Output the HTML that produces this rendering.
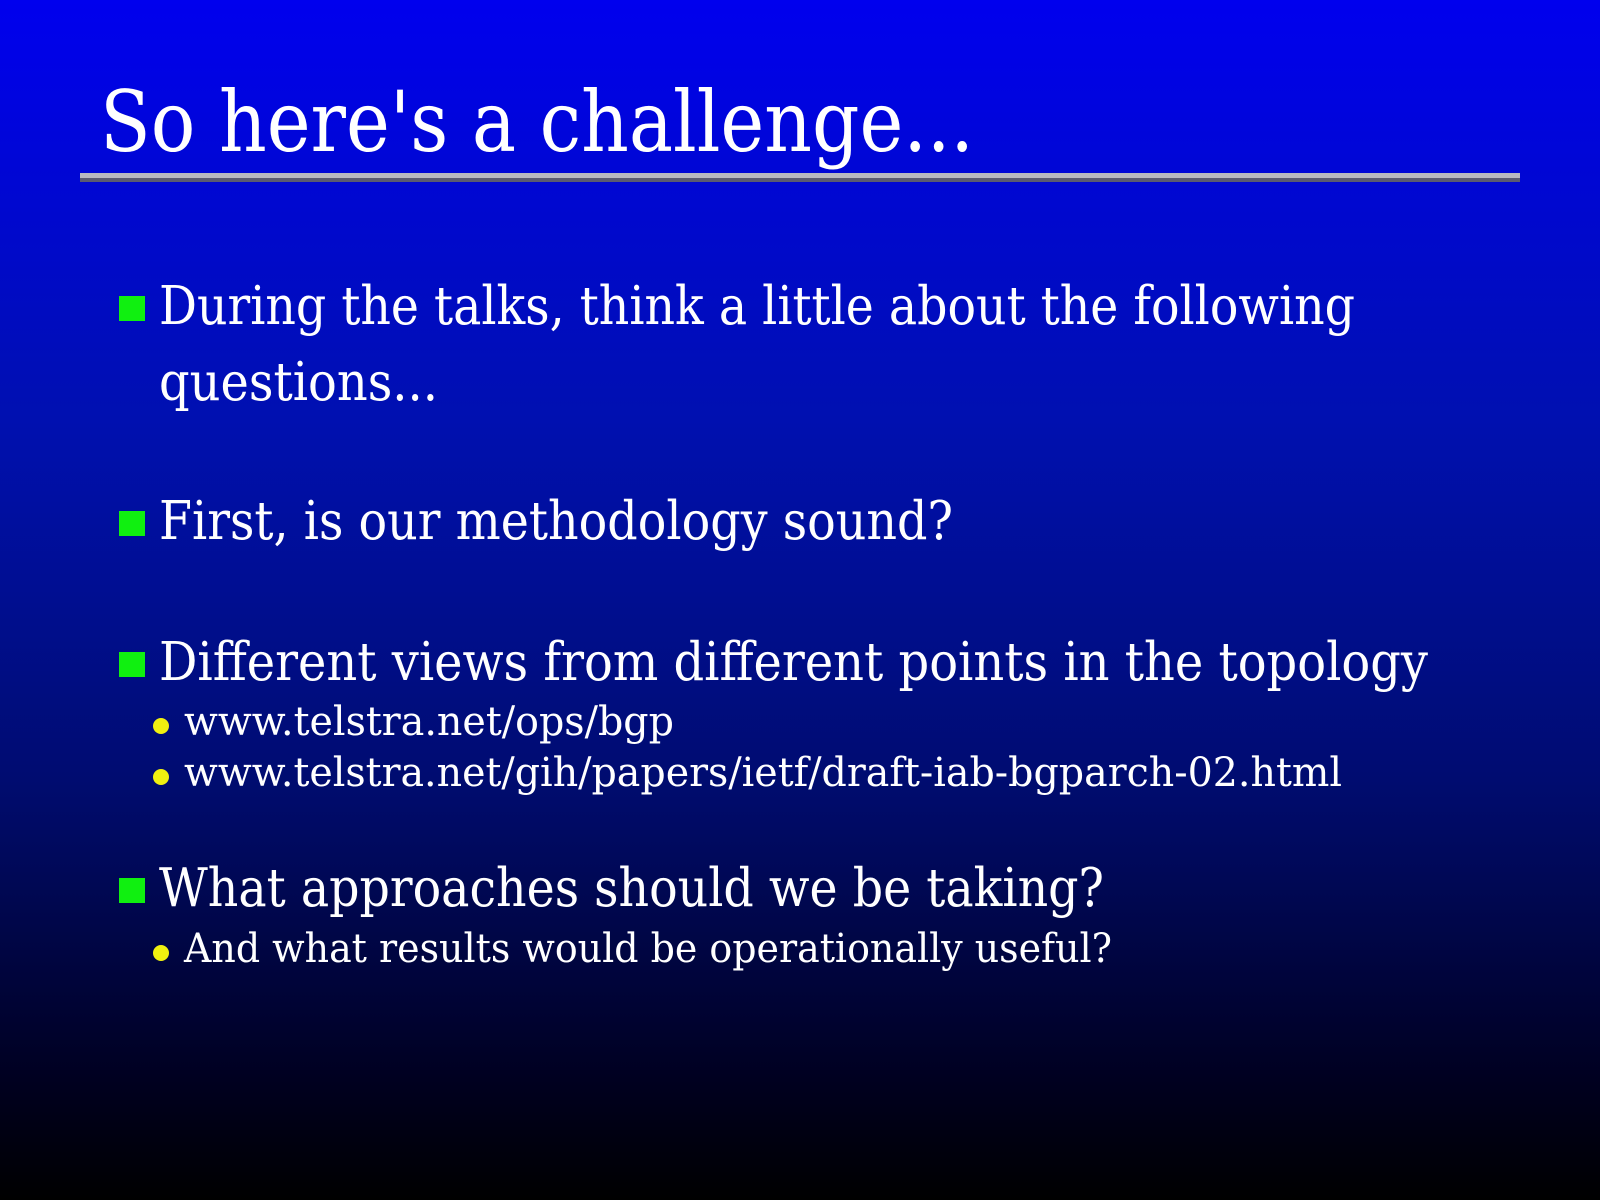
<!DOCTYPE html>
<html><head><meta charset="utf-8"><style>
html,body{margin:0;padding:0;width:1600px;height:1200px;overflow:hidden}
body{background:linear-gradient(to bottom,#0000ee 0%,#0010b0 35%,#000c70 65%,#000020 90%,#000 100%)}
svg{position:absolute;left:0;top:0}
text{font-family:"DejaVu Serif","Liberation Serif",serif;fill:#fff}
</style></head><body>
<svg width="1600" height="1200" viewBox="0 0 1600 1200">
<text x="100" y="151" font-size="84" textLength="874" lengthAdjust="spacingAndGlyphs">So here's a challenge...</text>
<rect x="80" y="173" width="1440" height="5" fill="#b8b8c0"/>
<rect x="80" y="178" width="1440" height="4" fill="#5a5a70"/>

<rect x="119" y="296" width="26" height="25" fill="#10f010"/>
<text x="159" y="324" font-size="53" textLength="1196" lengthAdjust="spacingAndGlyphs">During the talks, think a little about the following</text>
<text x="159" y="400" font-size="53" textLength="279" lengthAdjust="spacingAndGlyphs">questions...</text>

<rect x="119" y="511" width="26" height="25" fill="#10f010"/>
<text x="159" y="539" font-size="53" textLength="794" lengthAdjust="spacingAndGlyphs">First, is our methodology sound?</text>

<rect x="119" y="652" width="26" height="25" fill="#10f010"/>
<text x="159" y="680" font-size="53" textLength="1269" lengthAdjust="spacingAndGlyphs">Different views from different points in the topology</text>
<circle cx="161" cy="726" r="8" fill="#f0f010"/>
<text x="184" y="735" font-size="40" textLength="490" lengthAdjust="spacingAndGlyphs">www.telstra.net/ops/bgp</text>
<circle cx="161" cy="777" r="8" fill="#f0f010"/>
<text x="184" y="786" font-size="40" textLength="1158" lengthAdjust="spacingAndGlyphs">www.telstra.net/gih/papers/ietf/draft-iab-bgparch-02.html</text>

<rect x="119" y="878" width="26" height="25" fill="#10f010"/>
<text x="159" y="906" font-size="53" textLength="945" lengthAdjust="spacingAndGlyphs">What approaches should we be taking?</text>
<circle cx="161" cy="953" r="8" fill="#f0f010"/>
<text x="184" y="962" font-size="40" textLength="928" lengthAdjust="spacingAndGlyphs">And what results would be operationally useful?</text>
</svg>
</body></html>
